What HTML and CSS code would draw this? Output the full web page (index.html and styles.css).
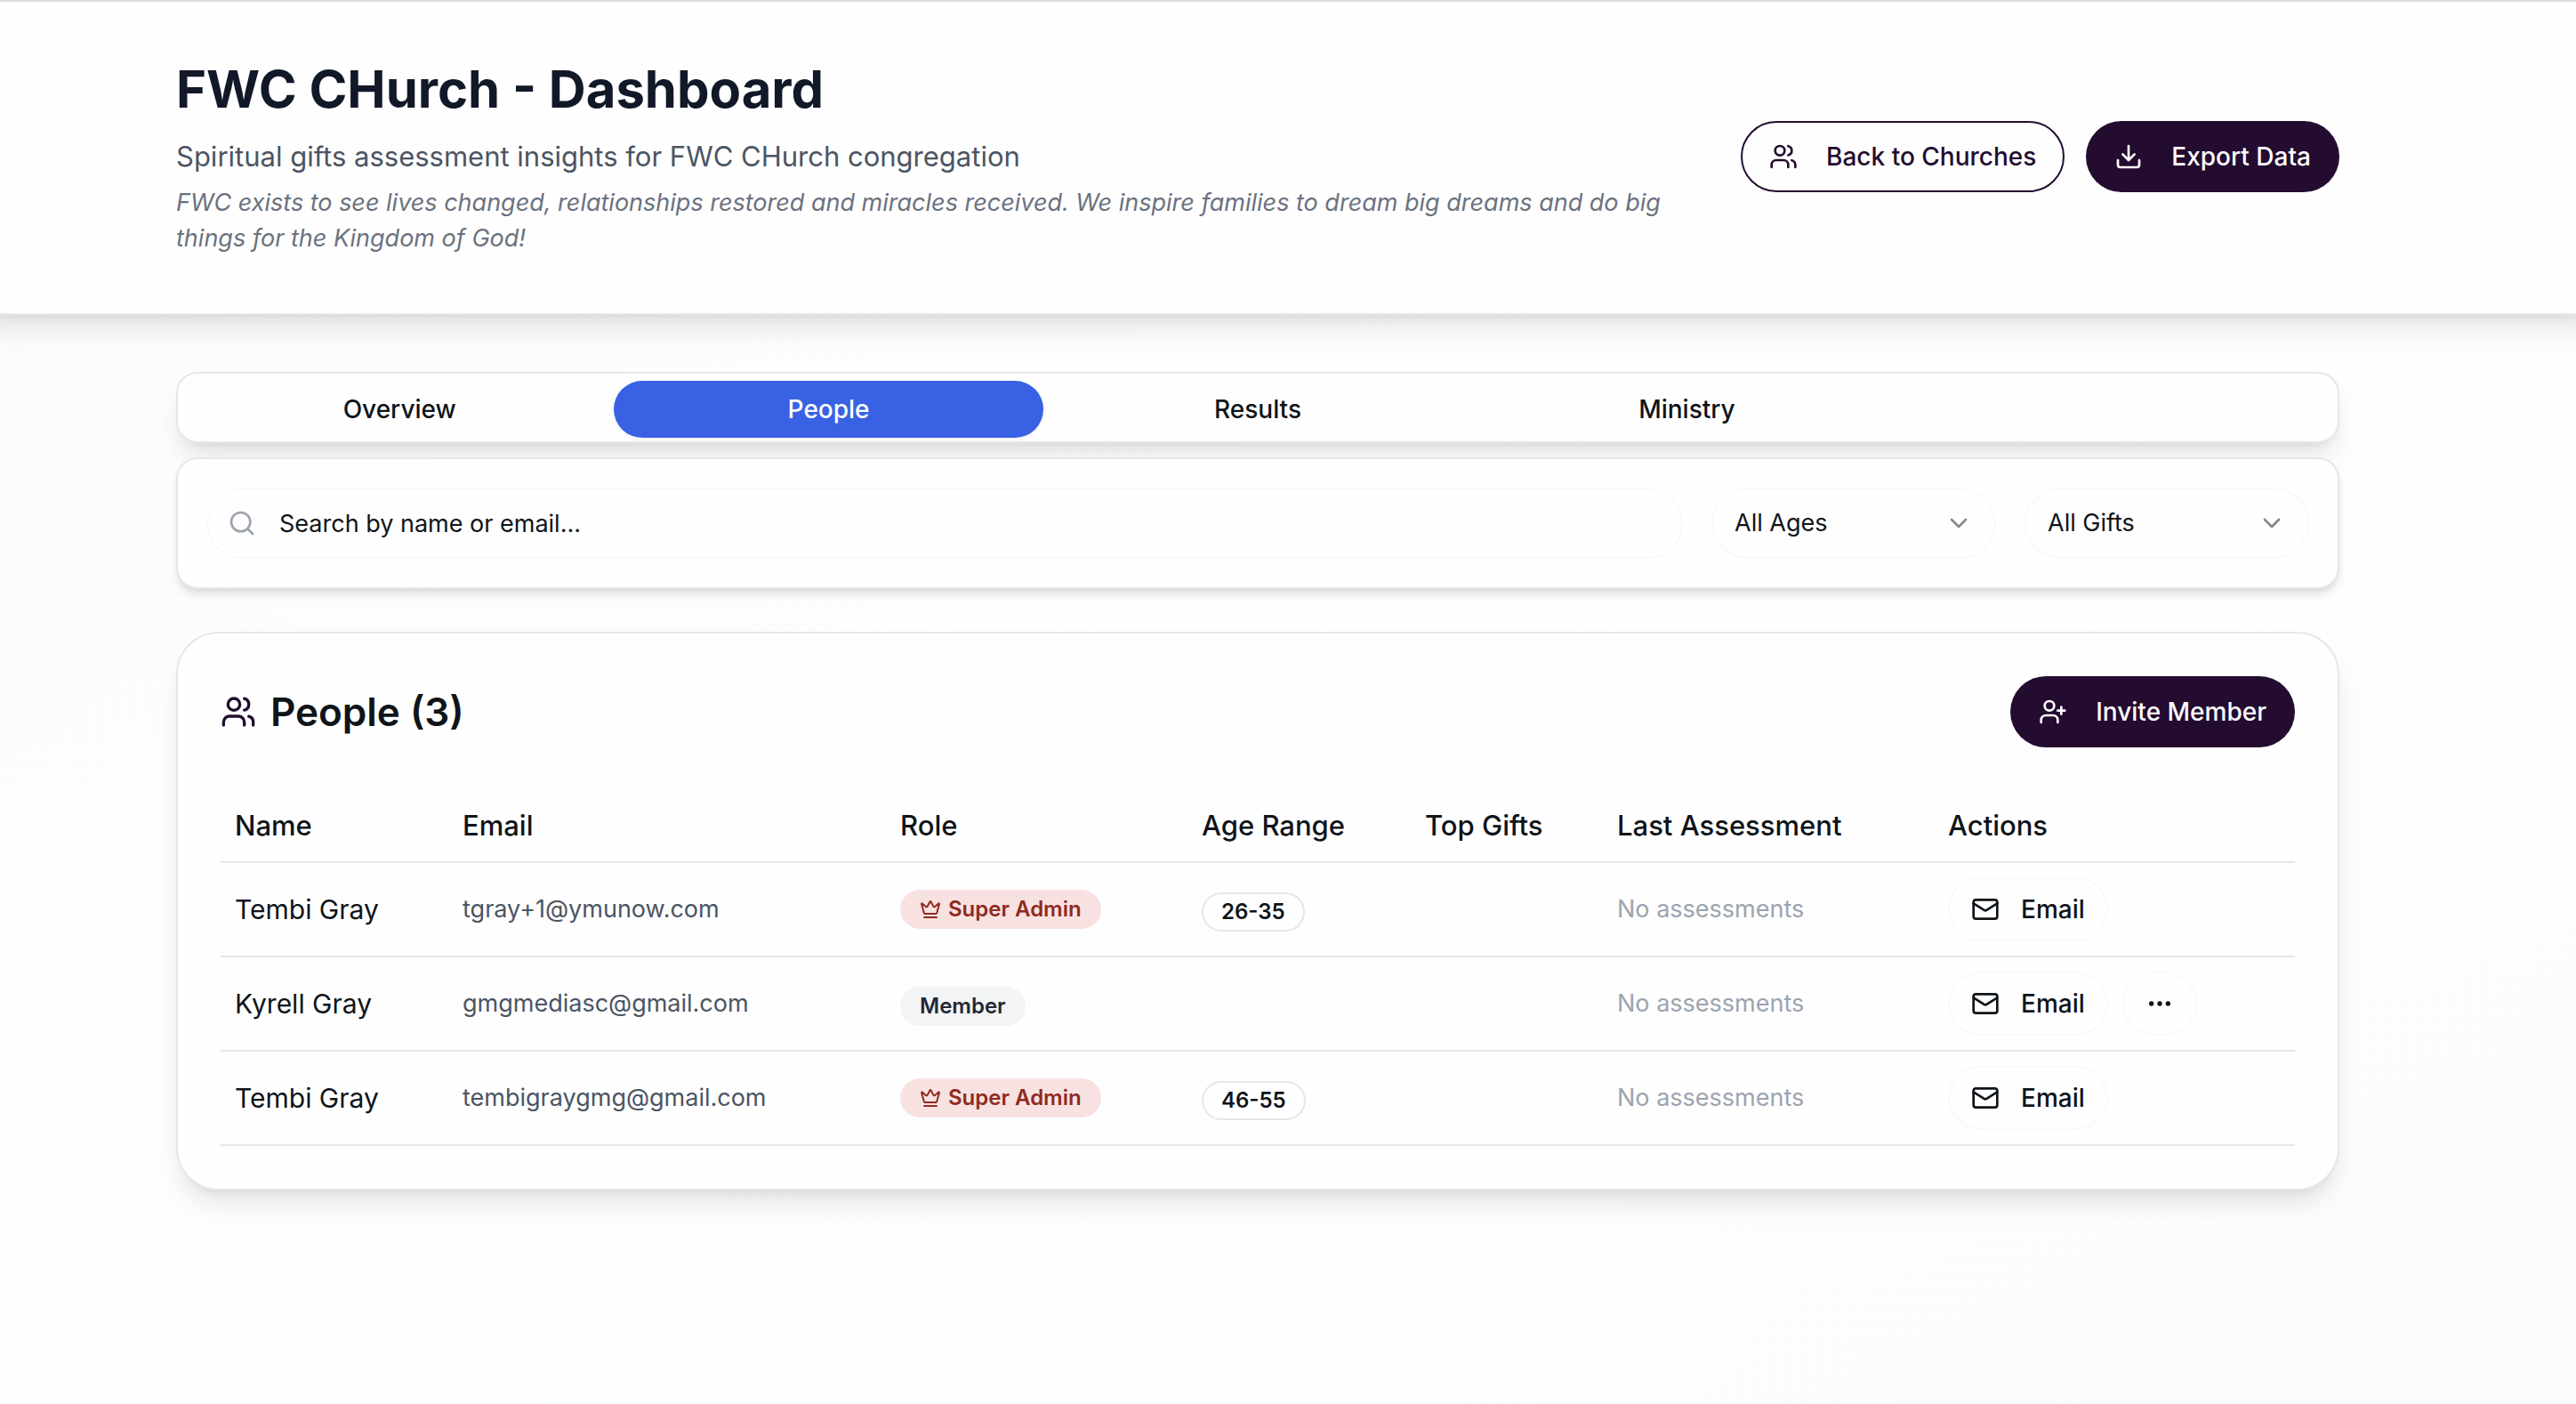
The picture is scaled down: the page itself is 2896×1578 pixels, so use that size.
FILE: index.html
```
<!DOCTYPE html>
<html lang="en">
<head>
<meta charset="utf-8">
<meta name="viewport" content="width=device-width, initial-scale=1">
<title>FWC CHurch - Dashboard</title>
<link rel="stylesheet" href="styles.css">
</head>
<body>
<svg class="sprite" aria-hidden="true">
  <symbol id="users" viewBox="0 0 24 24"><path d="M16 21v-2a4 4 0 0 0-4-4H6a4 4 0 0 0-4 4v2"/><circle cx="9" cy="7" r="4"/><path d="M22 21v-2a4 4 0 0 0-3-3.87"/><path d="M16 3.13a4 4 0 0 1 0 7.75"/></symbol>
  <symbol id="download" viewBox="0 0 24 24"><path d="M21 15v4a2 2 0 0 1-2 2H5a2 2 0 0 1-2-2v-4"/><path d="m7 10 5 5 5-5"/><path d="M12 15V3"/></symbol>
  <symbol id="search" viewBox="0 0 24 24"><circle cx="11" cy="11" r="8"/><path d="m21 21-4.3-4.3"/></symbol>
  <symbol id="chevron" viewBox="0 0 24 24"><path d="m6 9 6 6 6-6"/></symbol>
  <symbol id="user-plus" viewBox="0 0 24 24"><path d="M16 21v-2a4 4 0 0 0-4-4H6a4 4 0 0 0-4 4v2"/><circle cx="9" cy="7" r="4"/><path d="M19 8v6"/><path d="M22 11h-6"/></symbol>
  <symbol id="crown" viewBox="0 0 24 24"><path d="M11.562 3.266a.5.5 0 0 1 .876 0L15.39 8.87a1 1 0 0 0 1.516.294L21.183 5.5a.5.5 0 0 1 .798.519l-2.834 10.246a1 1 0 0 1-.956.734H5.81a1 1 0 0 1-.957-.734L2.02 6.02a.5.5 0 0 1 .798-.519l4.276 3.664a1 1 0 0 0 1.516-.294z"/><path d="M5 21h14"/></symbol>
  <symbol id="mail" viewBox="0 0 24 24"><rect width="20" height="16" x="2" y="4" rx="2"/><path d="m22 7-8.97 5.7a1.94 1.94 0 0 1-2.06 0L2 7"/></symbol>
  <symbol id="more" viewBox="0 0 24 24"><circle cx="12" cy="12" r="1"/><circle cx="19" cy="12" r="1"/><circle cx="5" cy="12" r="1"/></symbol>
</svg>

<header class="page-header">
  <div class="container header-row">
    <div class="header-text">
      <h1 class="title">FWC CHurch - Dashboard</h1>
      <p class="subtitle">Spiritual gifts assessment insights for FWC CHurch congregation</p>
      <p class="mission">FWC exists to see lives changed, relationships restored and miracles received. We inspire families to dream big dreams and do big things for the Kingdom of God!</p>
    </div>
    <div class="header-actions">
      <button type="button" class="btn btn-outline"><svg class="icon"><use href="#users"/></svg>Back to Churches</button>
      <button type="button" class="btn btn-primary"><svg class="icon"><use href="#download"/></svg>Export Data</button>
    </div>
  </div>
</header>

<main class="container main">
  <div class="tabs" role="tablist">
    <button type="button" class="tab" role="tab" aria-selected="false">Overview</button>
    <button type="button" class="tab tab-active" role="tab" aria-selected="true">People</button>
    <button type="button" class="tab" role="tab" aria-selected="false">Results</button>
    <button type="button" class="tab" role="tab" aria-selected="false">Ministry</button>
  </div>

  <form class="filters">
    <div class="field field-search">
      <svg class="icon field-icon"><use href="#search"/></svg>
      <input class="control control-search" type="text" aria-label="Search people" placeholder="Search by name or email...">
    </div>
    <div class="field field-select">
      <select class="control control-select" aria-label="Age range"><option>All Ages</option></select>
      <svg class="icon field-chevron"><use href="#chevron"/></svg>
    </div>
    <div class="field field-select">
      <select class="control control-select" aria-label="Gift"><option>All Gifts</option></select>
      <svg class="icon field-chevron"><use href="#chevron"/></svg>
    </div>
  </form>

  <section class="card">
    <div class="card-header">
      <h2 class="card-title"><svg class="icon icon-lg"><use href="#users"/></svg>People (3)</h2>
      <button type="button" class="btn btn-primary"><svg class="icon"><use href="#user-plus"/></svg>Invite Member</button>
    </div>
    <table class="people">
      <colgroup>
        <col class="col-name"><col class="col-email"><col class="col-role"><col class="col-age"><col class="col-gifts"><col class="col-last"><col>
      </colgroup>
      <thead>
        <tr><th>Name</th><th>Email</th><th>Role</th><th>Age Range</th><th>Top Gifts</th><th>Last Assessment</th><th>Actions</th></tr>
      </thead>
      <tbody>
        <tr>
          <td>Tembi Gray</td>
          <td class="email">tgray+1@ymunow.com</td>
          <td><div class="flow"><span class="badge badge-admin"><svg class="icon icon-sm"><use href="#crown"/></svg>Super Admin</span></div></td>
          <td><span class="badge badge-age">26-35</span></td>
          <td></td>
          <td class="muted">No assessments</td>
          <td><div class="flow"><button type="button" class="btn btn-ghost"><svg class="icon"><use href="#mail"/></svg>Email</button></div></td>
        </tr>
        <tr>
          <td>Kyrell Gray</td>
          <td class="email">gmgmediasc@gmail.com</td>
          <td><span class="badge badge-member">Member</span></td>
          <td></td>
          <td></td>
          <td class="muted">No assessments</td>
          <td><div class="flow"><button type="button" class="btn btn-ghost"><svg class="icon"><use href="#mail"/></svg>Email</button><button type="button" class="btn btn-ghost" aria-label="More actions"><svg class="icon"><use href="#more"/></svg></button></div></td>
        </tr>
        <tr>
          <td>Tembi Gray</td>
          <td class="email">tembigraygmg@gmail.com</td>
          <td><div class="flow"><span class="badge badge-admin"><svg class="icon icon-sm"><use href="#crown"/></svg>Super Admin</span></div></td>
          <td><span class="badge badge-age">46-55</span></td>
          <td></td>
          <td class="muted">No assessments</td>
          <td><div class="flow"><button type="button" class="btn btn-ghost"><svg class="icon"><use href="#mail"/></svg>Email</button></div></td>
        </tr>
      </tbody>
    </table>
  </section>
</main>
</body>
</html>
```
FILE: styles.css
```
:root {
  --ink: #0f1419;
  --plum: #230c30;
  --blue: #3961e3;
  --line: #e5e7eb;
  --rule: #e1e8ed;
  --faint: #f9f9fa;
  --shadow-md: 0 8px 12px -2px rgba(0, 0, 0, 0.1), 0 4px 8px -4px rgba(0, 0, 0, 0.1);
  --shadow-lg: 0 20px 30px -6px rgba(0, 0, 0, 0.1), 0 8px 12px -8px rgba(0, 0, 0, 0.1);
}

*, *::before, *::after { box-sizing: border-box; }

body {
  margin: 0;
  min-height: 100vh;
  background: linear-gradient(to bottom right, #fafbfd, #fefefe 50%, #fbfcfe);
  color: var(--ink);
  font-family: Inter, "Liberation Sans", sans-serif;
  font-size: 30px;
  line-height: 48px;
}

h1, h2, p { margin: 0; }

button, input, select { font: inherit; color: inherit; }

.sprite { display: none; }

.icon {
  flex: none;
  width: 32px;
  height: 32px;
  fill: none;
  stroke: currentColor;
  stroke-width: 2;
  stroke-linecap: round;
  stroke-linejoin: round;
}
.icon-lg { width: 40px; height: 40px; color: var(--plum); }
.icon-sm { width: 24px; height: 24px; }

.container {
  width: 100%;
  max-width: 2628px;
  margin: 0 auto;
  padding: 0 132px 0 64px;
}

/* Header */
.page-header {
  background: #fefefe;
  border-top: 2px solid #dcdcdd;
  border-bottom: 2px solid var(--line);
  box-shadow: 0 -2px 30px 16px rgba(0, 0, 0, 0.1), 0 -8px 12px 8px rgba(0, 0, 0, 0.1);
}
.header-row {
  display: flex;
  align-items: center;
  justify-content: space-between;
  gap: 48px;
  padding-top: 62px;
  padding-bottom: 64px;
}
.title { color: #111827; font-size: 58px; font-weight: 700; line-height: 72px; }
.subtitle { margin-top: 16px; color: #4b5563; font-size: 31px; }
.mission { margin-top: 8px; color: #6b7280; font-size: 27px; font-style: italic; line-height: 40px; }
.header-actions { display: flex; flex: none; gap: 24px; }

/* Buttons */
.btn {
  display: inline-flex;
  flex: none;
  align-items: center;
  justify-content: center;
  gap: 32px;
  height: 80px;
  padding: 0 32px;
  border: 2px solid transparent;
  border-radius: 40px;
  background: none;
  font-size: 28px;
  font-weight: 500;
  line-height: 40px;
  white-space: nowrap;
}
.btn-outline { padding: 0 30px; border-color: var(--plum); color: var(--plum); }
.btn-primary { border: 0; background: var(--plum); color: #fefefe; }
.btn-ghost { gap: 24px; height: 72px; padding: 0 24px; border-color: var(--faint); border-radius: 36px; }

/* Tabs */
.main { display: flex; flex-direction: column; padding-top: 64px; padding-bottom: 64px; }
.tabs {
  display: grid;
  grid-template-columns: repeat(5, 1fr);
  height: 80px;
  padding: 8px;
  border: 2px solid var(--line);
  border-radius: 24px;
  background: #fefefe;
  box-shadow: var(--shadow-lg);
}
.tab {
  height: 64px;
  padding: 0 24px;
  border: 0;
  border-radius: 32px;
  background: none;
  font-size: 28px;
  font-weight: 500;
  line-height: 40px;
}
.tab-active { background: var(--blue); color: #fefefe; box-shadow: 0 2px 4px rgba(0, 0, 0, 0.05); }

/* Filters */
.filters {
  display: flex;
  gap: 32px;
  margin-top: 16px;
  padding: 32px;
  border: 2px solid var(--line);
  border-radius: 24px;
  background: #fefefe;
  box-shadow: var(--shadow-md);
}
.field { position: relative; display: flex; align-items: center; }
.field-search { flex: 1; }
.field-select { flex: none; width: 320px; }
.control {
  width: 100%;
  height: 80px;
  padding: 0 24px;
  border: 2px solid var(--faint);
  border-radius: 40px;
  background: transparent;
  font-size: 27px;
  line-height: 40px;
}
.control-search { padding-left: 80px; }
.control-search::placeholder { color: var(--ink); opacity: 1; }
.control-select { appearance: none; }
.field-icon { position: absolute; left: 24px; color: #9ca3af; }
.field-chevron { position: absolute; right: 26px; opacity: 0.5; pointer-events: none; }

/* People card */
.card {
  margin-top: 48px;
  padding: 48px;
  border: 2px solid var(--line);
  border-radius: 48px;
  background: #fefefe;
  box-shadow: var(--shadow-lg);
}
.card-header { display: flex; align-items: center; justify-content: space-between; }
.card-title { display: flex; align-items: center; gap: 16px; font-size: 44px; font-weight: 600; line-height: 48px; }

.people { width: 100%; margin-top: 48px; border-collapse: separate; border-spacing: 0; table-layout: fixed; }
.col-name { width: 256px; }
.col-email { width: 492px; }
.col-role { width: 339px; }
.col-age { width: 251px; }
.col-gifts { width: 216px; }
.col-last { width: 372px; }
.people th, .people td { padding: 0 16px; border-bottom: 2px solid var(--rule); text-align: left; vertical-align: middle; white-space: nowrap; }
.people th { height: 82px; font-size: 31px; font-weight: 500; }
.people td { height: 106px; }
.people .email { color: #4b5563; font-size: 27px; }
.people .muted { color: #9ca3af; font-size: 27px; }
.flow { display: flex; align-items: center; gap: 16px; }

.badge {
  display: inline-flex;
  align-items: center;
  gap: 8px;
  height: 44px;
  padding: 0 20px;
  border: 2px solid transparent;
  border-radius: 22px;
  font-size: 24px;
  font-weight: 600;
  line-height: 32px;
}
.badge-admin { background: #f8e2e1; color: #8f2a21; }
.badge-member { background: #f3f4f6; color: #1f2937; }
.badge-age { border-color: var(--rule); }
```
